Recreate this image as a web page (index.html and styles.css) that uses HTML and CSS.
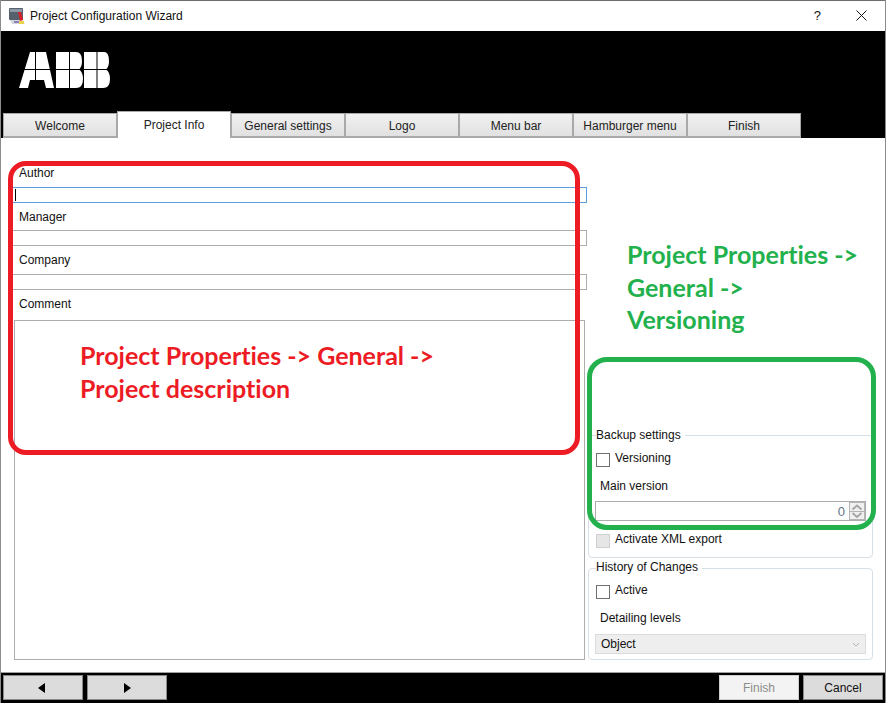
FILE: index.html
```html
<!DOCTYPE html>
<html lang="en">
<head>
  <meta charset="UTF-8">
  <meta name="viewport" content="width=device-width, initial-scale=1.0">
  <title>Project Configuration Wizard</title>
  <link rel="stylesheet" href="styles.css">
</head>
<body>
  <div class="window">

    <!-- title bar -->
    <div class="titlebar">
      <svg class="app-icon" width="17" height="17" viewBox="0 0 17 17">
        <rect x="0" y="0" width="14" height="12" rx="1" fill="#55606c"/>
        <rect x="1" y="1" width="12" height="3" fill="#8d99a6"/>
        <path d="M1 12h12l3 4H3z" fill="#d4d7da"/>
        <path d="M9 4l3 0 2 8-3 1z" fill="#d8202a"/>
        <path d="M10 13h5v3h-5z" fill="#e8d34a"/>
        <path d="M5 13h5v2H5z" fill="#8f7fc0"/>
      </svg>
      <span class="title-text">Project Configuration Wizard</span>
      <span class="help-btn">?</span>
      <svg class="close-btn" width="11" height="11" viewBox="0 0 11 11">
        <path d="M0.5 0.5l10 10M10.5 0.5l-10 10" stroke="#111" stroke-width="1" fill="none"/>
      </svg>
    </div>

    <!-- black header -->
    <div class="header">
      <svg class="logo" width="91" height="36" viewBox="0 0 91 36">
        <path d="M11 0H27L35 36H27L25 28H11L9 36H0Z" fill="#fff"/>
        <path d="M37 0H57Q63 0 63 9Q63 15 60 17.5Q64 20 64 27Q64 36 57 36H37Z" fill="#fff"/>
        <path d="M65 0H85Q90 0 90 9Q90 15 87 17.5Q91 20 91 27Q91 36 84 36H65Z" fill="#fff"/>
        <path d="M16.5 0V28M50.5 0V36M78 0V36M0 17.5H91" stroke="#000" stroke-width="1" fill="none"/>
      </svg>
      <div class="tabs">
        <div class="tab">Welcome</div>
        <div class="tab active">Project Info</div>
        <div class="tab">General settings</div>
        <div class="tab">Logo</div>
        <div class="tab">Menu bar</div>
        <div class="tab">Hamburger menu</div>
        <div class="tab">Finish</div>
      </div>
    </div>

    <!-- page content -->
    <div class="content">
      <div class="left-col">
        <label class="field-label first">Author</label>
        <input class="text-input focused" type="text">
        <label class="field-label">Manager</label>
        <input class="text-input" type="text">
        <label class="field-label tall">Company</label>
        <input class="text-input" type="text">
        <label class="field-label taller">Comment</label>
        <textarea class="comment"></textarea>
      </div>

      <div class="right-col">
        <fieldset class="group backup">
          <legend>Backup settings</legend>
          <div class="check-row">
            <input class="check" type="checkbox">
            <span>Versioning</span>
          </div>
          <div class="sub-label">Main version</div>
          <div class="spinner">
            <span class="spin-value">0</span>
            <div class="spin-btns">
              <svg width="14" height="8" viewBox="0 0 14 8"><path d="M2.5 6.5l4.5-4 4.5 4" stroke="#a6a6a6" stroke-width="2" fill="none"/></svg>
              <svg width="14" height="7" viewBox="0 0 14 7"><path d="M2.5 1l4.5 4 4.5-4" stroke="#a6a6a6" stroke-width="2" fill="none"/></svg>
            </div>
          </div>
          <div class="check-row xml">
            <input class="check disabled" type="checkbox" disabled>
            <span>Activate XML export</span>
          </div>
        </fieldset>

        <fieldset class="group history">
          <legend>History of Changes</legend>
          <div class="check-row">
            <input class="check" type="checkbox">
            <span>Active</span>
          </div>
          <div class="sub-label">Detailing levels</div>
          <div class="select-box">
            <span>Object</span>
            <svg width="8" height="5" viewBox="0 0 8 5"><path d="M1 1l3 3 3-3" stroke="#b5b5b5" fill="none"/></svg>
          </div>
        </fieldset>
      </div>
    </div>

    <!-- bottom buttons -->
    <div class="footer">
      <button class="foot-btn"><span class="arrow-left"></span></button>
      <button class="foot-btn"><span class="arrow-right"></span></button>
      <button class="foot-btn finish">Finish</button>
      <button class="foot-btn">Cancel</button>
    </div>

    <!-- annotations drawn on top of the screenshot -->
    <div class="mark red-box"></div>
    <div class="mark green-box"></div>
    <div class="note red-note">Project Properties -&gt; General -&gt;<br>Project description</div>
    <div class="note green-note">Project Properties -&gt;<br>General -&gt;<br>Versioning</div>
  </div>
</body>
</html>
```

FILE: styles.css
```css
* {
  box-sizing: border-box;
}

body {
  margin: 0;
  font-family: "Liberation Sans", Arial, sans-serif;
  font-size: 12px;
  color: #111;
  background-color: #fff;
}

.window {
  position: relative;
  display: flex;
  flex-direction: column;
  width: 886px;
  height: 703px;
  border-left: 1px solid #8c8c8c;
  border-right: 1px solid #8c8c8c;
  overflow: hidden;
}

/* title bar */
.titlebar {
  display: flex;
  align-items: center;
  height: 31px;
  border-top: 1px solid #6e6e6e;
  padding-left: 8px;
  background-color: #fff;
}

.app-icon {
  margin-right: 4px;
}

.title-text {
  flex: 1;
}

.help-btn {
  margin: 0 35px 2px 0;
  font-size: 13px;
}

.close-btn {
  margin: 0 18px 2px 0;
}

/* header */
.header {
  display: flex;
  flex-direction: column;
  justify-content: space-between;
  height: 107px;
  background-color: #000;
}

.logo {
  margin: 21px 0 0 18px;
}

.tabs {
  display: flex;
  align-items: flex-end;
  padding-left: 2px;
}

.tab {
  display: flex;
  align-items: center;
  justify-content: center;
  width: 114px;
  height: 25px;
  border: 1px solid #a9a9a9;
  border-bottom-width: 2px;
  background: linear-gradient(#f1f1f1, #e1e1e1);
  color: #222;
  padding-top: 1px;
}

.tab.active {
  height: 27px;
  border-bottom: none;
  background: #fff;
  padding-top: 0;
}

/* content */
.content {
  flex: 1;
  display: flex;
  padding-left: 11px;
  background-color: #fff;
}

.left-col {
  display: flex;
  flex-direction: column;
  width: 576px;
  padding-top: 22px;
  padding-bottom: 12px;
}

.field-label {
  display: block;
  height: 27px;
  padding: 7px 0 0 7px;
  line-height: 14px;
}

.field-label.first {
  padding-top: 6px;
}

.field-label.tall {
  height: 28px;
}

.field-label.taller {
  height: 30px;
}

.text-input {
  display: block;
  width: 575px;
  height: 16px;
  margin: 0;
  padding: 0;
  border: 1px solid #adadad;
  background-color: #fff;
  outline: none;
}

.text-input.focused {
  border-color: #5a9ee0;
  background: linear-gradient(#000, #000) 2px 1px / 1px 12px no-repeat;
}

.comment {
  flex: 1;
  display: block;
  width: 571px;
  margin: 0 0 0 2px;
  padding: 0;
  border: 1px solid #adadad;
  outline: none;
  resize: none;
}

.right-col {
  display: flex;
  flex-direction: column;
  justify-content: flex-end;
  gap: 2px;
  width: 285px;
  padding-bottom: 12px;
}

.group {
  margin: 0;
  min-width: 0;
  padding: 0 6px 0 7px;
  border: 1px solid #d7e0e6;
  border-radius: 4px;
}

.group legend {
  margin-left: 0;
  padding: 0 4px 0 0;
  height: 16px;
  line-height: 14px;
  font-size: 12px;
}

.backup {
  height: 131px;
}

.backup legend {
  line-height: 16px;
}

.history {
  height: 100px;
}

.check-row {
  display: flex;
  align-items: flex-start;
  gap: 5px;
  height: 14px;
  margin-top: 10px;
}

.history .check-row {
  margin-top: 9px;
}

.check-row span {
  margin-top: -2px;
  line-height: 14px;
}

.check-row.xml {
  margin-top: 13px;
}

.check {
  appearance: none;
  width: 14px;
  height: 14px;
  margin: 0;
  border: 1px solid #707070;
  background-color: #fff;
}

.check.disabled {
  border-color: #d0d0d0;
  background-color: #e6e6e6;
}

.sub-label {
  height: 14px;
  line-height: 14px;
  margin: 12px 0 8px 4px;
}

.history .sub-label {
  margin-bottom: 9px;
}

.spinner {
  display: flex;
  align-items: center;
  justify-content: flex-end;
  width: 271px;
  height: 20px;
  margin-left: -1px;
  border: 1px solid #adadad;
  background-color: #fff;
}

.spin-value {
  margin-right: 4px;
  color: #5f7486;
  font-size: 13px;
}

.spin-btns {
  display: flex;
  flex-direction: column;
  gap: 1px;
  padding: 1px;
  background-color: #b4b4b4;
}

.spin-btns svg {
  display: block;
  background-color: #f0f0f0;
}

.select-box {
  display: flex;
  align-items: center;
  justify-content: space-between;
  width: 271px;
  height: 20px;
  margin-left: -1px;
  padding: 0 5px 0 5px;
  border: 1px solid #dcdcdc;
  background-color: #eeeeee;
}

/* footer */
.footer {
  display: flex;
  gap: 4px;
  height: 31px;
  padding: 2px 2px 3px 2px;
  border-top: 1px solid #a0a0a0;
  background-color: #000;
}

.foot-btn {
  display: flex;
  align-items: center;
  justify-content: center;
  width: 80px;
  height: 25px;
  padding: 0;
  border: 1px solid #8a8a8a;
  background-color: #dcdcdc;
  color: #111;
  font-family: inherit;
  font-size: 12px;
}

.foot-btn.finish {
  margin-left: auto;
  border-color: #cfcfcf;
  background-color: #f3f3f3;
  color: #8c8c8c;
}

.arrow-left {
  margin-right: 3px;
  border-top: 5.5px solid transparent;
  border-bottom: 5.5px solid transparent;
  border-right: 7px solid #000;
}

.arrow-right {
  border-top: 5.5px solid transparent;
  border-bottom: 5.5px solid transparent;
  border-left: 7px solid #000;
}

/* annotations */
.mark {
  position: absolute;
  border-style: solid;
  border-width: 5px;
  pointer-events: none;
}

.red-box {
  left: 7px;
  top: 161px;
  width: 572px;
  height: 294px;
  border-color: #ed1c24;
  border-radius: 18px;
}

.green-box {
  left: 586px;
  top: 357px;
  width: 289px;
  height: 173px;
  border-color: #22b14c;
  border-radius: 20px;
}

.note {
  position: absolute;
  font-family: Lato, "Open Sans", sans-serif;
  font-weight: 700;
  font-size: 25px;
  font-variant-ligatures: none;
  white-space: nowrap;
}

.red-note {
  left: 79px;
  top: 339px;
  line-height: 33px;
  color: #ed1c24;
}

.green-note {
  left: 626px;
  top: 238px;
  line-height: 32.5px;
  color: #22b14c;
}
```
